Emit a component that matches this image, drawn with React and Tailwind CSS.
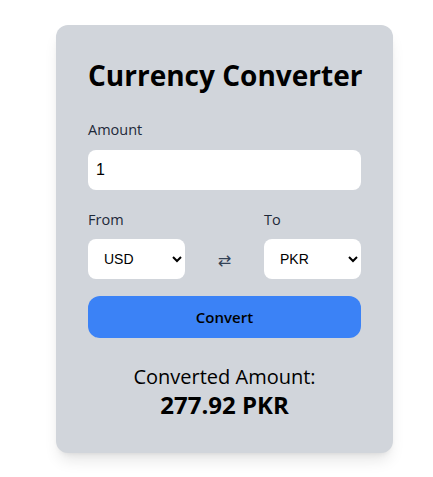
export default function App() {
  return (
    <div className="min-h-[477px] bg-white pt-[25px] pl-[56px]">
      <div className="w-[337px] rounded-xl bg-[#d1d5db] px-8 pt-8 pb-[34px] shadow-lg font-['Open_Sans',sans-serif]">
        <h1 className="whitespace-nowrap text-[28px] font-bold leading-9 text-black">Currency Converter</h1>
        <label className="mt-[27px] block text-[14.5px] leading-5 text-gray-800">Amount</label>
        <input
          defaultValue="1"
          className="mt-[10px] block h-10 w-full rounded-lg bg-white px-2 text-base text-black outline-none font-['Liberation_Sans',sans-serif]"
        />
        <div className="mt-5 flex items-end justify-between">
          <div>
            <label className="block text-[14.5px] leading-5 text-gray-800">From</label>
            <select className="mt-[9px] block h-10 w-[97px] rounded-lg bg-white px-3 text-sm text-black font-['Liberation_Sans',sans-serif]">
              <option>USD</option>
            </select>
          </div>
          <div className="flex h-10 items-center pt-1 text-base text-[#334155] font-['DejaVu_Sans',sans-serif]">⇄</div>
          <div>
            <label className="block text-[14.5px] leading-5 text-gray-800">To</label>
            <select className="mt-[9px] block h-10 w-[97px] rounded-lg bg-white px-3 text-sm text-black font-['Liberation_Sans',sans-serif]">
              <option>PKR</option>
            </select>
          </div>
        </div>
        <button className="mt-[17px] block h-[42px] w-full rounded-xl bg-[#3b82f6] text-[15px] font-semibold text-black">
          Convert
        </button>
        <div className="mt-[25px] text-center">
          <p className="text-xl leading-7 text-black">Converted Amount:</p>
          <p className="text-2xl font-bold leading-7 text-black">277.92 PKR</p>
        </div>
      </div>
    </div>
  );
}
